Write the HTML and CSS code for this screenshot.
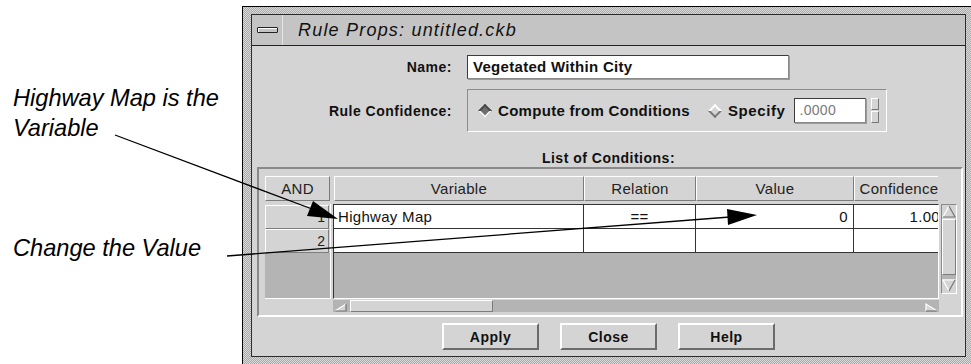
FILE: index.html
```html
<!DOCTYPE html>
<html lang="en">
<head>
  <meta charset="UTF-8" />
  <title>Rule Props: untitled.ckb</title>
  <link rel="stylesheet" href="styles.css">
</head>
<body>

  <div class="page">
    <div class="notes">
      <p class="note note-var">Highway Map is the<br>Variable</p>
      <p class="note note-val">Change the Value</p>
    </div>

    <div class="window">
      <div class="panel">
        <div class="titlebar">
          <div class="menu-btn"><span class="menu-bar"></span></div>
          <div class="title">Rule Props: untitled.ckb</div>
        </div>

        <div class="content">
          <div class="field-row">
            <span class="field-label">Name:</span>
            <div class="text-input name-input">Vegetated Within City</div>
          </div>

          <div class="field-row conf-row">
            <span class="field-label">Rule Confidence:</span>
            <div class="radio-box">
              <span class="radio"><span class="diamond on"></span>Compute from Conditions</span>
              <span class="radio radio-spec"><span class="diamond"></span>Specify</span>
              <div class="text-input spec-input">.0000</div>
              <div class="spinner"><span></span><span></span></div>
            </div>
          </div>

          <div class="list-label">List of Conditions:</div>

          <div class="matrix-frame">
            <div class="matrix">
              <div class="row-heads">
                <div class="hcell">AND</div>
                <div class="row-head-body">
                  <div class="rcell">1</div>
                  <div class="rcell">2</div>
                  <div class="rfill"></div>
                </div>
              </div>

              <div class="data-col">
                <div class="col-heads">
                  <div class="hcell c-var">Variable</div>
                  <div class="hcell c-rel">Relation</div>
                  <div class="hcell c-val">Value</div>
                  <div class="hcell c-conf">Confidence</div>
                </div>

                <div class="data-body">
                  <div class="clip">
                    <div class="drow">
                      <div class="cell c-var">Highway Map</div>
                      <div class="cell c-rel center">==</div>
                      <div class="cell c-val right">0</div>
                      <div class="cell c-conf right">1.00</div>
                    </div>
                    <div class="drow">
                      <div class="cell c-var"></div>
                      <div class="cell c-rel"></div>
                      <div class="cell c-val"></div>
                      <div class="cell c-conf"></div>
                    </div>
                    <div class="dfill"></div>
                  </div>

                  <div class="vscroll">
                    <div class="sb-arrow">
                      <svg width="14" height="13" viewBox="0 0 14 13">
                        <polygon points="7,1 13,12 1,12" fill="#d4d4d4"/>
                        <polyline points="1,12 7,1" fill="none" stroke="#fff" stroke-width="1.2"/>
                        <polyline points="7,1 13,12 1,12" fill="none" stroke="#777" stroke-width="1.2"/>
                      </svg>
                    </div>
                    <div class="sb-thumb"></div>
                    <div class="sb-arrow sb-down">
                      <svg width="14" height="13" viewBox="0 0 14 13">
                        <polygon points="1,1 13,1 7,12" fill="#d4d4d4"/>
                        <polyline points="7,12 1,1 13,1" fill="none" stroke="#fff" stroke-width="1.2"/>
                        <polyline points="13,1 7,12" fill="none" stroke="#777" stroke-width="1.2"/>
                      </svg>
                    </div>
                  </div>
                </div>

                <div class="hscroll">
                  <div class="hs-arrow">
                    <svg width="15" height="12" viewBox="0 0 15 12">
                      <polygon points="2,11 13,4 13,11" fill="#d4d4d4"/>
                      <polyline points="2,11 13,4" fill="none" stroke="#fff" stroke-width="1.2"/>
                      <polyline points="13,4 13,11 2,11" fill="none" stroke="#777" stroke-width="1.2"/>
                    </svg>
                  </div>
                  <div class="hs-thumb"></div>
                  <div class="hs-arrow hs-right">
                    <svg width="15" height="12" viewBox="0 0 15 12">
                      <polygon points="2,4 13,11 2,11" fill="#d4d4d4"/>
                      <polyline points="2,11 2,4 13,11" fill="none" stroke="#fff" stroke-width="1.2"/>
                      <polyline points="13,11 2,11" fill="none" stroke="#777" stroke-width="1.2"/>
                    </svg>
                  </div>
                </div>
              </div>
            </div>
          </div>

          <div class="buttons">
            <button class="btn">Apply</button>
            <button class="btn">Close</button>
            <button class="btn">Help</button>
          </div>
        </div>
      </div>
    </div>

    <!-- callout arrows drawn over the dialog -->
    <svg class="callouts" width="971" height="364" viewBox="0 0 971 364">
      <line x1="115" y1="135" x2="312" y2="209" stroke="#000" stroke-width="1.3"/>
      <polygon points="338,219 307,216 313,201" fill="#000"/>
      <line x1="227" y1="256" x2="730" y2="217" stroke="#000" stroke-width="1.3"/>
      <polygon points="757,215 728,225 727,209" fill="#000"/>
    </svg>
  </div>

</body>
</html>
```

FILE: styles.css
```css
/* Reset */
* {
  box-sizing: border-box;
  margin: 0;
  padding: 0;
}

html, body {
  overflow: hidden;
}

body {
  background: #fff;
  width: 971px;
  height: 364px;
  font-family: "Liberation Sans", Arial, sans-serif;
  color: #111;
}

.page {
  position: relative;
  display: flex;
  width: 971px;
  height: 364px;
}

/* Annotations on the left */
.notes {
  width: 242px;
  flex: none;
  padding-left: 13px;
  font-style: italic;
  font-size: 23.6px;
  line-height: 30px;
  color: #000;
}

.note-var {
  margin-top: 83px;
}

.note-val {
  margin-top: 90px;
}

.callouts {
  position: absolute;
  left: 0;
  top: 0;
  pointer-events: none;
}

/* Motif window */
.window {
  flex: none;
  width: 732px;
  height: 366px;
  margin-top: 6px;
  border-left: 1px solid #000;
  border-top: 1px solid #000;
  padding: 7px 8px 8px 8px;
  background: repeating-conic-gradient(#a9a9a9 0 25%, #dadada 0 50%) 0 0 / 2px 2px;
}

.panel {
  height: 343px;
  border: 1px solid #2b2b2b;
  background: #d4d4d4;
}

.titlebar {
  display: flex;
  height: 31px;
  border-bottom: 1px solid #222;
  background: #c4c4c4;
}

.menu-btn {
  width: 31px;
  flex: none;
  display: flex;
  align-items: center;
  justify-content: center;
  border-right: 1px solid #e4e4e4;
}

.menu-bar {
  width: 21px;
  height: 6px;
  border: 1px solid #222;
  border-radius: 1px;
  background: #c4c4c4;
  box-shadow: inset 1px 1px #fff;
}

.title {
  padding-left: 15px;
  font-style: italic;
  font-size: 18px;
  letter-spacing: 1.2px;
  line-height: 30px;
  color: #111;
}

.content {
  padding-top: 9px;
}

/* Form rows */
.field-row {
  display: flex;
  align-items: center;
  gap: 15px;
}

.field-label {
  width: 200px;
  flex: none;
  text-align: right;
  font-weight: bold;
  font-size: 14px;
  letter-spacing: 0.5px;
}

.text-input {
  background: #fff;
  border: 1px solid;
  border-color: #3c3c3c #8a8a8a #8a8a8a #3c3c3c;
  box-shadow: 1px 1px 0 #9a9a9a;
}

.name-input {
  width: 322px;
  height: 24px;
  padding-left: 5px;
  font-weight: bold;
  font-size: 15px;
  letter-spacing: 0.3px;
  line-height: 22px;
}

.conf-row {
  margin-top: 10px;
}

.radio-box {
  width: 420px;
  height: 43px;
  display: flex;
  align-items: center;
  padding: 0 6px 0 10px;
  border: 1px solid;
  border-color: #8c8c8c #fff #fff #8c8c8c;
  font-weight: bold;
  font-size: 15px;
  letter-spacing: 0.3px;
}

.radio {
  display: flex;
  align-items: center;
}

.radio-spec {
  margin-left: 18px;
  letter-spacing: 0.6px;
}

.diamond {
  width: 10px;
  height: 10px;
  margin: 0 8px 0 2px;
  transform: rotate(45deg);
  background: #d4d4d4;
  border: 2px solid;
  border-color: #fff #777 #777 #fff;
}

.diamond.on {
  background: #6e6e6e;
  border-color: #4a4a4a #f4f4f4 #f4f4f4 #4a4a4a;
}

.spec-input {
  width: 72px;
  height: 25px;
  margin-left: 9px;
  padding-left: 4px;
  font-weight: normal;
  font-size: 14px;
  line-height: 23px;
  color: #7a7a7a;
}

.spinner {
  display: flex;
  flex-direction: column;
  gap: 1px;
  margin-left: 5px;
}

.spinner span {
  width: 8px;
  height: 12px;
  background: #d4d4d4;
  border: 1px solid;
  border-color: #fff #777 #777 #fff;
}

.list-label {
  margin-top: 17px;
  text-align: center;
  font-weight: bold;
  font-size: 14px;
  letter-spacing: 0.5px;
  line-height: 18px;
}

/* Conditions matrix */
.matrix-frame {
  margin: 0 2px 0 5px;
  padding: 7px 4px 3px 6px;
  border: 2px solid;
  border-color: #8a8a8a #fff #fff #8a8a8a;
}

.matrix {
  display: flex;
  gap: 2px;
}

.row-heads {
  width: 66px;
  flex: none;
}

.hcell {
  flex: none;
  height: 25px;
  border: 1px solid;
  border-color: #fff #7c7c7c #7c7c7c #fff;
  font-size: 15px;
  letter-spacing: 0.3px;
  line-height: 23px;
  text-align: center;
  color: #222;
  white-space: nowrap;
  overflow: hidden;
}

.row-heads .hcell {
  width: 65px;
}

.row-head-body {
  height: 95px;
  margin-top: 3px;
  padding-top: 1px;
  display: flex;
  flex-direction: column;
  border-right: 1px solid #fff;
  border-bottom: 1px solid #fff;
}

.rcell {
  flex: none;
  width: 64px;
  height: 24px;
  padding-right: 3px;
  border: 1px solid;
  border-color: #fff #7c7c7c #7c7c7c #fff;
  text-align: right;
  font-size: 14px;
  line-height: 22px;
  color: #222;
}

.rfill {
  flex: 1;
  background: #b4b4b4;
}

.data-col {
  width: 624px;
  flex: none;
}

.col-heads {
  display: flex;
  width: 604px;
  margin-left: 1px;
  overflow: hidden;
}

.c-var { width: 250px; }
.c-rel { width: 112px; }
.c-val { width: 158px; }
.c-conf { width: 90px; }

.data-body {
  display: flex;
  align-items: flex-start;
  gap: 2px;
  margin-top: 3px;
}

.clip {
  width: 606px;
  height: 95px;
  display: flex;
  flex-direction: column;
  overflow: hidden;
  background: #b4b4b4;
  border: 1px solid;
  border-color: #333 #fff #fff #333;
}

.drow {
  flex: none;
  display: flex;
  height: 24px;
  background: #fff;
  border-bottom: 1px solid #333;
}

.cell {
  flex: none;
  padding: 0 4px;
  border-right: 1px solid #333;
  font-size: 15px;
  letter-spacing: 0.3px;
  line-height: 23px;
  white-space: nowrap;
  overflow: hidden;
}

.cell.center { text-align: center; }
.cell.right { text-align: right; padding-right: 5px; }
.cell.c-conf { padding-right: 3px; }

/* Scrollbars */
.vscroll {
  width: 16px;
  height: 90px;
  display: flex;
  flex-direction: column;
  background: #b4b4b4;
  border: 1px solid;
  border-color: #8a8a8a #fff #fff #8a8a8a;
}

.sb-arrow {
  height: 14px;
  flex: none;
  background: #d4d4d4;
}

.sb-arrow svg {
  display: block;
}

.sb-down {
  margin-top: auto;
}

.sb-thumb {
  height: 56px;
  flex: none;
  background: #d4d4d4;
  border: 1px solid;
  border-color: #fff #7c7c7c #7c7c7c #fff;
}

.hscroll {
  display: flex;
  width: 606px;
  height: 12px;
  margin-top: 1px;
  background: #b4b4b4;
}

.hs-arrow svg {
  display: block;
}

.hs-thumb {
  width: 143px;
  margin-left: 2px;
  background: #d4d4d4;
  border: 1px solid;
  border-color: #fff #7c7c7c #7c7c7c #fff;
}

.hs-right {
  margin-left: auto;
}

/* Buttons */
.buttons {
  display: flex;
  justify-content: center;
  gap: 21px;
  margin-top: 6px;
}

.btn {
  width: 97px;
  height: 27px;
  background: #d4d4d4;
  border: 2px solid;
  border-color: #fff #6b6b6b #6b6b6b #fff;
  font-family: inherit;
  font-weight: bold;
  font-size: 14px;
  letter-spacing: 0.5px;
  color: #111;
}
```
